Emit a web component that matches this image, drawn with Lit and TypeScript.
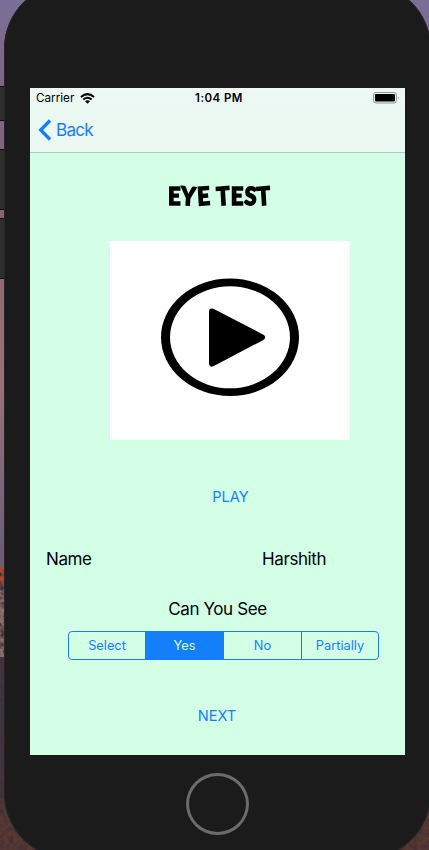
import { LitElement, html, css } from "lit";
import { customElement, state } from "lit/decorators.js";
import { classMap } from "lit/directives/class-map.js";

@customElement("app-root")
export class AppRoot extends LitElement {
  @state() private selected = "Yes";
  private options = ["Select", "Yes", "No", "Partially"];

  static styles = css`
    :host { display: block; position: relative; width: 429px; height: 850px; overflow: hidden;
      font-family: Inter, "Liberation Sans", sans-serif; color: #000; }
    * { box-sizing: border-box; }
    .wallpaper { position: absolute; inset: 0; display: block; }
    .side-key { position: absolute; left: 0; width: 5px; background: #2e2e2e; border: solid #0d0d0d; border-width: 1px 0; }
    .mute { top: 86px; height: 35px; }
    .up { top: 149px; height: 61px; }
    .down { top: 218px; height: 61px; }
    .phone { position: relative; margin: -17px 0 0 4px; width: 427px; height: 876px; border-radius: 66px;
      background: #1b1b1b; padding: 105px 26px 0; box-shadow: inset 0 0 0 1px #252525; }
    .screen { width: 375px; height: 667px; background: #d4ffe7; display: flex; flex-direction: column; }
    .bar { height: 65px; background: linear-gradient(#eff9f6, #ebf8f2 18px, #eaf8f1); border-bottom: 1px solid #a9cfbc; }
    .status { height: 20px; display: grid; grid-template-columns: 1fr auto 1fr; align-items: center; font-size: 11.7px;
      line-height: 20px; padding: 0 5px 0 6px; }
    .carrier { display: flex; align-items: center; gap: 6px; }
    .carrier span, .carrier svg { display: block; }
    .time { font-weight: 600; font-size: 11.5px; letter-spacing: .45px; padding: 0 0 0 2px; line-height: 20px; }
    .battery { justify-self: end; display: block; }
    .back { height: 44px; display: flex; align-items: center; gap: 4px; padding-left: 8px; color: #157efb;
      font-size: 17px; letter-spacing: -.7px; }
    .content { flex: 1; display: flex; flex-direction: column; align-items: center; }
    h1 { display: flex; margin: 25px 0 0 4px; height: 34px; font: 900 25px/34px Lato, sans-serif;
      -webkit-text-stroke: 1.5px #000; gap: 1px; transform: scaleX(.88); }
    h1 span { display: block; white-space: pre; }
    .lean-l { transform: rotate(-4deg); }
    .lean-r { transform: rotate(4deg); }
    .video { display: block; width: 240px; height: 199px; margin: 29px 0 0 25px; background: #fff; }
    .link { color: #157efb; border: 0; background: none; padding: 0; font: 400 14.6px/30px Inter, sans-serif; height: 30px; }
    .play { margin: 42px 0 0 26px; }
    .row { align-self: stretch; display: grid; grid-template-columns: 216px 1fr; padding-left: 16px; margin-top: 35px;
      font-size: 17px; letter-spacing: -.4px; line-height: 24px; }
    .question { margin: 26px 0 0; font-size: 17px; letter-spacing: -.4px; line-height: 24px; }
    .segments { width: 311px; height: 29px; margin: 10px 0 0 12px; border: 1px solid #157efb; border-radius: 4px;
      overflow: hidden; display: grid; grid-template-columns: 76px 78px 78px 77px; }
    .segment { border: 0; border-left: 1px solid #157efb; background: none; color: #157efb; padding: 0;
      font: 400 12.8px/27px Inter, sans-serif; }
    .segment:first-child { border-left: 0; }
    .segment.on { background: #157efb; color: #d4ffe7; }
    .next { margin: 41px 0 0 -1px; }
    .home { width: 63px; height: 62px; border: 3px solid #6b6b6b; border-radius: 50%; margin: 18px 0 0 156px; }
  `;

  private title() {
    const leans = ["", "r", "l", "", "l", "", "r", "l"];
    return [..."EYE TEST"].map((c, i) => html`<span
      class=${classMap({ "lean-l": leans[i] === "l", "lean-r": leans[i] === "r" })}>${c}</span>`);
  }

  render() {
    return html`
      <svg class="wallpaper" width="429" height="850">
        <defs>
          <linearGradient id="sky" x2="0" y2="1">
            <stop offset="0" stop-color="#7b6f98" /><stop offset=".12" stop-color="#7c6480" />
            <stop offset=".27" stop-color="#8b666d" /><stop offset=".45" stop-color="#9a7078" />
            <stop offset=".63" stop-color="#6e607b" /><stop offset=".665" stop-color="#6c5c72" />
          </linearGradient>
          <filter id="grain" x="0" y="0" width="1" height="1">
            <feTurbulence type="fractalNoise" baseFrequency=".22" numOctaves="3" seed="4" />
            <feColorMatrix values="0 0 0 0 .05  0 0 0 0 .03  0 0 0 0 .04  2.5 0 0 0 -.9" />
          </filter>
        </defs>
        <rect width="429" height="850" fill="url(#sky)" />
        <path d="M0 566l5 3v17H0z" fill="#b04532" />
        <path d="M0 585h5v72H0z" fill="#8b6d6a" />
        <path d="M0 657h5v143H0z" fill="#3f3443" />
        <path d="M0 798h429v52H0z" fill="#5a3830" />
        <rect y="570" width="429" height="280" filter="url(#grain)" />
      </svg>
      <div class="side-key mute"></div>
      <div class="side-key up"></div>
      <div class="side-key down"></div>
      <div class="phone">
        <div class="screen">
          <div class="bar">
            <div class="status">
              <div class="carrier">
                <span>Carrier</span>
                <svg width="15" height="11" viewBox="0 0 15 11">
                  <path d="M.9 4.1Q7.5-1.8 14.1 4.1" fill="none" stroke="#000" stroke-width="2" />
                  <path d="M3.3 6.5Q7.5 2.8 11.7 6.5" fill="none" stroke="#000" stroke-width="1.9" />
                  <path d="M5 8.3Q7.5 6 10 8.3L7.5 10.7z" />
                </svg>
              </div>
              <span class="time">1:04 PM</span>
              <svg class="battery" width="27" height="12" viewBox="0 0 27 12">
                <rect x=".5" y=".5" width="23" height="10.5" rx="2.6" fill="none" stroke="#8e9994" />
                <rect x="2" y="2" width="20" height="7.5" rx="1" />
                <path d="M25 4q1.5 1.7 0 3.5z" fill="#8e9994" />
              </svg>
            </div>
            <div class="back">
              <svg width="14" height="22" viewBox="0 0 14 22">
                <path d="M12 1.5L2.7 11 12 20.5" fill="none" stroke="#157efb" stroke-width="3.3" />
              </svg>
              <span>Back</span>
            </div>
          </div>
          <div class="content">
            <h1>${this.title()}</h1>
            <svg class="video" viewBox="0 0 240 199">
              <path fill-rule="evenodd" d="M51 96.3a69 58.7 0 1 0 138 0a69 58.7 0 1 0-138 0zM60 96.3a60 51 0 1 1 120 0a60 51 0 1 1-120 0z" />
              <path d="M102 70.5L152 96.3 102 122.5z" stroke="#000" stroke-width="6" stroke-linejoin="round" />
            </svg>
            <button class="link play">PLAY</button>
            <div class="row"><span>Name</span><span>Harshith</span></div>
            <div class="question">Can You See</div>
            <div class="segments">
              ${this.options.map((o) => html`<button
                class=${classMap({ segment: true, on: o === this.selected })}
                @click=${() => (this.selected = o)}>${o}</button>`)}
            </div>
            <button class="link next">NEXT</button>
          </div>
        </div>
        <div class="home"></div>
      </div>
    `;
  }
}
